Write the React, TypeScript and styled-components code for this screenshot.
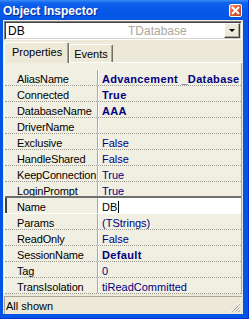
import React from 'react';
import styled, { createGlobalStyle } from 'styled-components';

const Global = createGlobalStyle`
  html, body { margin: 0; padding: 0; background: #fff; }
  body { font-family: "Liberation Sans", Arial, sans-serif; }
  * { box-sizing: border-box; }
`;

const Window = styled.div`
  width: 249px;
  height: 319px;
  background: #0055e5;
  display: flex;
  flex-direction: column;
  overflow: hidden;
  border-right: 1px solid #0831d9;
  border-bottom: 1px solid #0831d9;
`;

const TitleBar = styled.div`
  height: 20px;
  flex: none;
  display: flex;
  align-items: center;
  justify-content: space-between;
  padding: 0 6px 0 3px;
  background: linear-gradient(#3a8cf6 0px, #0e62ec 3px, #0659e8 10px, #0556e4 20px);
`;

const Title = styled.span`
  color: #fff;
  font: bold 12px "Liberation Sans", Arial, sans-serif;
  text-shadow: 1px 1px 0 #0a2c9a;
  padding-top: 1px;
`;

const CloseButton = styled.div`
  width: 13px;
  height: 13px;
  margin-top: 1px;
  border: 1px solid #fff;
  border-radius: 2px;
  background: linear-gradient(135deg, #f0a080 0%, #e05a32 45%, #c63c14 100%);
  display: flex;
  align-items: center;
  justify-content: center;
`;

const Body = styled.div`
  flex: 1;
  display: flex;
  flex-direction: column;
  margin: 0 5px 4px 3px;
  padding: 1px 1px 0 1px;
  background: #ece9d8;
  min-height: 0;
`;

const Combo = styled.div`
  height: 19px;
  flex: none;
  display: flex;
  align-items: center;
  background: #fff;
  border-top: 1px solid #808080;
  border-left: 1px solid #808080;
  border-right: 1px solid #fff;
  border-bottom: 1px solid #fff;
  box-shadow: inset 1px 1px 0 #404040, inset -1px -1px 0 #d4d0c8;
  padding: 0 1px 0 3px;
`;

const ComboName = styled.span`
  font-size: 12px;
  color: #000;
  width: 120px;
`;

const ComboType = styled.span`
  flex: 1;
  font-size: 12px;
  color: #aca899;
`;

const DropButton = styled.div`
  width: 16px;
  height: 15px;
  background: #ece9d8;
  border-top: 1px solid #fff;
  border-left: 1px solid #fff;
  border-right: 1px solid #404040;
  border-bottom: 1px solid #404040;
  box-shadow: inset -1px -1px 0 #aca899;
  display: flex;
  align-items: center;
  justify-content: center;
`;

const Arrow = styled.div`
  width: 0;
  height: 0;
  border-left: 3px solid transparent;
  border-right: 3px solid transparent;
  border-top: 3px solid #000;
`;

const TabStrip = styled.div`
  height: 23px;
  flex: none;
  display: flex;
  align-items: flex-end;
  padding-top: 2px;
  border-bottom: 1px solid #fff;
`;

const Tab = styled.div<{ $active?: boolean }>`
  height: ${p => (p.$active ? '21px' : '18px')};
  margin-bottom: ${p => (p.$active ? '-1px' : '0')};
  padding: ${p => (p.$active ? '3px 6px 0 7px' : '3px 4px 0 4px')};
  font-size: 11px;
  color: #000;
  background: #ece9d8;
  border-top: 1px solid #fff;
  border-left: 1px solid #fff;
  border-right: 1px solid #716f64;
  box-shadow: inset -1px 0 0 #aca899;
  border-radius: 2px 2px 0 0;
  position: relative;
  z-index: ${p => (p.$active ? 1 : 0)};
`;

const Grid = styled.div`
  flex: 1;
  display: flex;
  flex-direction: column;
  padding-top: 7px;
  background: #f1efe2;
  border-left: 1px solid #fff;
  border-right: 1px solid #aca899;
  min-height: 0;
`;

const Row = styled.div<{ $selected?: boolean }>`
  height: 16px;
  flex: none;
  display: grid;
  grid-template-columns: 93px 1fr;
  border-bottom: 1px ${p => (p.$selected ? 'solid #fff' : 'dotted #9a9a92')};
  ${p => (p.$selected ? 'border-top: 2px solid #6f6f6f; margin-top: -2px; height: 18px; box-shadow: inset 2px 0 0 #404040;' : '')}
`;

const NameCell = styled.div`
  font-size: 11px;
  line-height: 12px;
  letter-spacing: -0.15px;
  padding: 3px 0 0 12px;
  color: #000;
  white-space: nowrap;
  overflow: hidden;
  border-right: 1px solid #aca899;
  box-shadow: 1px 0 0 #fff;
`;

const ValueCell = styled.div<{ $bold?: boolean; $selected?: boolean }>`
  font-weight: ${p => (p.$bold ? 'bold' : 'normal')};
  letter-spacing: ${p => (p.$bold ? '0.35px' : '0')};
  font-size: 11px;
  line-height: 12px;
  padding: 3px 0 0 3px;
  margin-left: 1px;
  color: ${p => (p.$selected ? '#000' : '#000080')};
  background: ${p => (p.$selected ? '#fff' : 'transparent')};
  white-space: nowrap;
  overflow: hidden;
`;

const Caret = styled.span`
  display: inline-block;
  width: 1px;
  height: 12px;
  background: #000;
  vertical-align: -2px;
  margin-left: 1px;
`;

const StatusBar = styled.div`
  height: 18px;
  flex: none;
  margin-top: 2px;
  display: flex;
  align-items: center;
  justify-content: space-between;
  border-top: 1px solid #aca899;
  border-left: 1px solid #aca899;
  padding: 0 1px 0 1px;
  font-size: 11px;
  color: #000;
`;

const Grip = styled.svg`
  align-self: flex-end;
  margin-bottom: 1px;
`;

type Prop = { name: string; value: string; bold?: boolean; selected?: boolean };

const props: Prop[] = [
  { name: 'AliasName', value: 'Advancement _Database', bold: true },
  { name: 'Connected', value: 'True', bold: true },
  { name: 'DatabaseName', value: 'AAA', bold: true },
  { name: 'DriverName', value: '' },
  { name: 'Exclusive', value: 'False' },
  { name: 'HandleShared', value: 'False' },
  { name: 'KeepConnection', value: 'True' },
  { name: 'LoginPrompt', value: 'True' },
  { name: 'Name', value: 'DB', selected: true },
  { name: 'Params', value: '(TStrings)' },
  { name: 'ReadOnly', value: 'False' },
  { name: 'SessionName', value: 'Default', bold: true },
  { name: 'Tag', value: '0' },
  { name: 'TransIsolation', value: 'tiReadCommitted' },
];

export default function App() {
  return (
    <>
      <Global />
      <Window>
        <TitleBar>
          <Title>Object Inspector</Title>
          <CloseButton>
            <svg width="9" height="9" viewBox="0 0 9 9">
              <path d="M1 1 L8 8 M8 1 L1 8" stroke="#fff" strokeWidth="2" />
            </svg>
          </CloseButton>
        </TitleBar>
        <Body>
          <Combo>
            <ComboName>DB</ComboName>
            <ComboType>TDatabase</ComboType>
            <DropButton>
              <Arrow />
            </DropButton>
          </Combo>
          <TabStrip>
            <Tab $active>Properties</Tab>
            <Tab>Events</Tab>
          </TabStrip>
          <Grid>
            {props.map(p => (
              <Row key={p.name} $selected={p.selected}>
                <NameCell>{p.name}</NameCell>
                <ValueCell $bold={p.bold} $selected={p.selected}>
                  {p.value}
                  {p.selected && <Caret />}
                </ValueCell>
              </Row>
            ))}
          </Grid>
          <StatusBar>
            <span>All shown</span>
            <Grip width="11" height="11" viewBox="0 0 11 11">
              <path d="M10 1 L1 10 M10 4 L4 10 M10 7 L7 10" stroke="#fff" strokeWidth="1" />
              <path d="M10 2 L2 10 M10 5 L5 10 M10 8 L8 10" stroke="#aca899" strokeWidth="1" />
            </Grip>
          </StatusBar>
        </Body>
      </Window>
    </>
  );
}
